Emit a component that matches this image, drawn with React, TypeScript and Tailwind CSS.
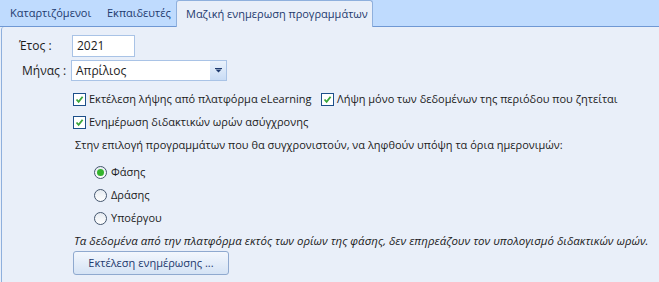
import React from 'react';

const Check = () => (
  <span className="w-[13px] h-[13px] border border-[#1c4f8a] bg-white flex items-center justify-center shrink-0">
    <svg width="9" height="9" viewBox="0 0 9 9">
      <path d="M1.5 4.5 L3.6 6.8 L7.6 1.8" fill="none" stroke="#3aa63a" strokeWidth="1.8" />
    </svg>
  </span>
);

const Radio = ({ checked }: { checked?: boolean }) => (
  <span className="w-[13px] h-[13px] rounded-full border border-[#44566e] bg-gradient-to-b from-[#e6ebf1] to-white flex items-center justify-center shrink-0">
    {checked && <span className="w-[7px] h-[7px] rounded-full bg-[#35b42e]" />}
  </span>
);

export default function App() {
  return (
    <div className="w-[659px] h-[282px] bg-[#e9eff9] text-[11px] text-[#1b1b1b] font-['Open_Sans',sans-serif] overflow-hidden whitespace-nowrap">
      {/* Tab strip */}
      <div className="h-[27px] bg-[#bfdbfe] flex items-end text-[11px]">
        <div className="h-[27px] w-[2px] border-b border-[#6f98d4]" />
        <div className="h-[27px] w-[96px] pl-[8px] flex items-center text-[#1e3a6e] border-b border-[#6f98d4]">Καταρτιζόμενοι</div>
        <div className="h-[27px] w-[78px] pl-[9px] flex items-center text-[#1e3a6e] border-b border-[#6f98d4]">Εκπαιδευτές</div>
        <div className="h-[27px] w-[197px] pl-[9px] flex items-center text-[#1e3a6e] bg-[#e9eff9] border border-b-0 border-[#8fb0dd] rounded-t-[3px]">Μαζική ενημερωση προγραμμάτων</div>
        <div className="flex-1 h-[27px] border-b border-[#6f98d4]" />
      </div>

      {/* Body */}
      <div className="h-[255px] border-l border-[#8fb0dd] ml-[1px] rounded-tl-[3px] pt-[8px]">
        <div className="flex items-center h-[22px] text-[12px]">
          <span className="w-[70px] pl-[17px]">Έτος :</span>
          <div className="w-[63px] h-[22px] bg-white border border-[#a9c3e6] flex items-center pl-[4px]">2021</div>
        </div>
        <div className="flex items-center h-[21px] mt-[3px] text-[12px]">
          <span className="w-[69px] pl-[20px]">Μήνας :</span>
          <div className="w-[156px] h-[21px] bg-white border border-[#a9c3e6] flex items-center">
            <span className="flex-1 pl-[4px]">Απρίλιος</span>
            <span className="w-[16px] h-[19px] bg-gradient-to-b from-[#eaf2fc] to-[#c9dcf5] flex items-center justify-center">
              <svg width="7" height="5" viewBox="0 0 7 5">
                <rect x="0" y="0" width="7" height="1" fill="#1e3a6e" />
                <path d="M0.5 1.5 L6.5 1.5 L3.5 4.5 Z" fill="#1e3a6e" />
              </svg>
            </span>
          </div>
        </div>

        <div className="pl-[71px] mt-[9px] flex items-center h-[18px]">
          <label className="flex items-center gap-[3px] w-[248px]">
            <Check />
            <span>Εκτέλεση λήψης από πλατφόρμα eLearning</span>
          </label>
          <label className="flex items-center gap-[3px]">
            <Check />
            <span>Λήψη μόνο των δεδομένων της περιόδου που ζητείται</span>
          </label>
        </div>
        <div className="pl-[71px] mt-[5px] flex items-center h-[18px]">
          <label className="flex items-center gap-[3px]">
            <Check />
            <span>Ενημέρωση διδακτικών ωρών ασύγχρονης</span>
          </label>
        </div>

        <div className="pl-[73px] mt-[5px] h-[18px] flex items-center">
          Στην επιλογή προγραμμάτων που θα συγχρονιστούν, να ληφθούν υπόψη τα όρια ημερονιμών:
        </div>

        <div className="pl-[92px] mt-[9px] flex flex-col gap-[5px]">
          <label className="flex items-center gap-[4px] h-[18px]">
            <Radio checked />
            <span>Φάσης</span>
          </label>
          <label className="flex items-center gap-[4px] h-[18px]">
            <Radio />
            <span>Δράσης</span>
          </label>
          <label className="flex items-center gap-[4px] h-[18px]">
            <Radio />
            <span>Υποέργου</span>
          </label>
        </div>

        <div className="pl-[72px] mt-[5px] h-[18px] flex items-center italic text-[11.5px]">
          Τα δεδομένα από την πλατφόρμα εκτός των ορίων της φάσης, δεν επηρεάζουν τον υπολογισμό διδακτικών ωρών.
        </div>

        <div className="pl-[71px] mt-[1px]">
          <button className="w-[156px] h-[24px] rounded-[3px] border border-[#8fa9cf] bg-gradient-to-b from-[#f3f7fd] to-[#d5e3f5] text-[#1e3a6e]">
            Εκτέλεση ενημέρωσης ...
          </button>
        </div>
      </div>
    </div>
  );
}
